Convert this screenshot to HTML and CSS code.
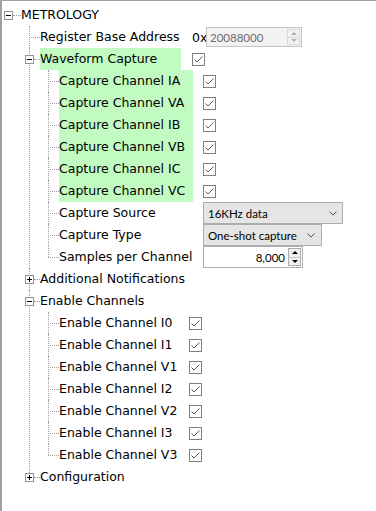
FILE: index.html
```html
<!DOCTYPE html>
<html lang="en">
<head>
    <meta charset="UTF-8">
    <title>METROLOGY</title>
    <link rel="stylesheet" href="styles.css">
</head>
<body>
    <svg class="defs" aria-hidden="true">
        <symbol id="minus" viewBox="0 0 9 9">
            <rect x="0.5" y="0.5" width="8" height="8" fill="#fff" stroke="#919191"/>
            <path d="M2 4.5H7" stroke="#000"/>
        </symbol>
        <symbol id="plus" viewBox="0 0 9 9">
            <rect x="0.5" y="0.5" width="8" height="8" fill="#fff" stroke="#919191"/>
            <path d="M2 4.5H7M4.5 2V7" stroke="#000"/>
        </symbol>
        <symbol id="check" viewBox="0 0 13 13">
            <rect x="0.5" y="0.5" width="12" height="12" fill="#fff" stroke="#7f7f7f"/>
            <path d="M2.5 6.5L5 9L10.5 3.5" fill="none" stroke="#5a5a5a" stroke-width="1"/>
        </symbol>
        <symbol id="chevron" viewBox="0 0 8 5">
            <path d="M0.5 0.5L4 4L7.5 0.5" fill="none" stroke="#555"/>
        </symbol>
    </svg>

    <div class="panel">
        <div class="tree">
            <div class="row root">
                <svg class="toggle"><use href="#minus"/></svg><span class="stub wide"></span><span class="text">METROLOGY</span>
            </div>
            <ul class="branch top">
                <li>
                    <div class="row">
                        <span class="stub"></span>
                        <span class="label col-a">Register Base Address</span>
                        <span class="prefix">0x</span>
                        <div class="field disabled">
                            <span class="txt">20088000</span>
                            <span class="spin"><i class="up"></i><i class="down"></i></span>
                        </div>
                    </div>
                </li>
                <li>
                    <div class="row">
                        <svg class="toggle"><use href="#minus"/></svg><span class="stub short"></span>
                        <span class="label col-a hl">Waveform Capture</span>
                        <svg class="check"><use href="#check"/></svg>
                    </div>
                    <ul class="branch">
                        <li><div class="row"><span class="stub"></span><span class="label col-b hl">Capture Channel IA</span><svg class="check"><use href="#check"/></svg></div></li>
                        <li><div class="row"><span class="stub"></span><span class="label col-b hl">Capture Channel VA</span><svg class="check"><use href="#check"/></svg></div></li>
                        <li><div class="row"><span class="stub"></span><span class="label col-b hl">Capture Channel IB</span><svg class="check"><use href="#check"/></svg></div></li>
                        <li><div class="row"><span class="stub"></span><span class="label col-b hl">Capture Channel VB</span><svg class="check"><use href="#check"/></svg></div></li>
                        <li><div class="row"><span class="stub"></span><span class="label col-b hl">Capture Channel IC</span><svg class="check"><use href="#check"/></svg></div></li>
                        <li><div class="row"><span class="stub"></span><span class="label col-b hl">Capture Channel VC</span><svg class="check"><use href="#check"/></svg></div></li>
                        <li>
                            <div class="row">
                                <span class="stub"></span><span class="label col-b">Capture Source</span>
                                <div class="select source"><span>16KHz data</span><svg class="chev"><use href="#chevron"/></svg></div>
                            </div>
                        </li>
                        <li>
                            <div class="row">
                                <span class="stub"></span><span class="label col-b">Capture Type</span>
                                <div class="select type"><span>One-shot capture</span><svg class="chev"><use href="#chevron"/></svg></div>
                            </div>
                        </li>
                        <li>
                            <div class="row">
                                <span class="stub"></span><span class="label col-b">Samples per Channel</span>
                                <div class="field number">
                                    <span class="txt">8,000</span>
                                    <span class="spin"><i class="up"></i><i class="down"></i></span>
                                </div>
                            </div>
                        </li>
                    </ul>
                </li>
                <li>
                    <div class="row"><svg class="toggle"><use href="#plus"/></svg><span class="stub short"></span><span class="text">Additional Notifications</span></div>
                </li>
                <li>
                    <div class="row"><svg class="toggle"><use href="#minus"/></svg><span class="stub short"></span><span class="text">Enable Channels</span></div>
                    <ul class="branch">
                        <li><div class="row"><span class="stub"></span><span class="label col-c">Enable Channel I0</span><svg class="check"><use href="#check"/></svg></div></li>
                        <li><div class="row"><span class="stub"></span><span class="label col-c">Enable Channel I1</span><svg class="check"><use href="#check"/></svg></div></li>
                        <li><div class="row"><span class="stub"></span><span class="label col-c">Enable Channel V1</span><svg class="check"><use href="#check"/></svg></div></li>
                        <li><div class="row"><span class="stub"></span><span class="label col-c">Enable Channel I2</span><svg class="check"><use href="#check"/></svg></div></li>
                        <li><div class="row"><span class="stub"></span><span class="label col-c">Enable Channel V2</span><svg class="check"><use href="#check"/></svg></div></li>
                        <li><div class="row"><span class="stub"></span><span class="label col-c">Enable Channel I3</span><svg class="check"><use href="#check"/></svg></div></li>
                        <li><div class="row"><span class="stub"></span><span class="label col-c">Enable Channel V3</span><svg class="check"><use href="#check"/></svg></div></li>
                    </ul>
                </li>
                <li>
                    <div class="row"><svg class="toggle"><use href="#plus"/></svg><span class="stub short"></span><span class="text">Configuration</span></div>
                </li>
            </ul>
        </div>
    </div>
</body>
</html>
```

FILE: styles.css
```css
body {
    margin: 0;
    font-family: "DejaVu Sans", Verdana, sans-serif;
    font-size: 12.5px;
    color: #000;
    background: #fff;
}
.defs {
    position: absolute;
    width: 0;
    height: 0;
}
.panel {
    height: 511px;
    box-sizing: border-box;
    border-left: 2px solid #a0a0a0;
    border-top: 1px solid #a0a0a0;
    padding-top: 3px;
    overflow: hidden;
}
.row {
    display: flex;
    align-items: center;
    height: 22px;
    white-space: nowrap;
}
.root {
    padding-left: 2px;
}
.toggle {
    position: relative;
    display: block;
    flex: none;
    width: 9px;
    height: 9px;
}
.branch .toggle {
    margin-left: -4px;
}
.stub {
    flex: none;
    width: 11px;
    height: 0;
    border-top: 1px dotted #a0a0a0;
}
.stub.wide {
    width: 8px;
}
.stub.short {
    width: 6px;
}
.branch {
    list-style: none;
    margin: 0 0 0 19px;
    padding: 0;
}
.tree > .branch {
    margin-left: 27px;
}
.branch > li {
    position: relative;
}
.branch > li::before {
    content: "";
    position: absolute;
    left: 0;
    top: 0;
    bottom: 0;
    border-left: 1px dotted #a0a0a0;
}
.branch > li:last-child::before {
    bottom: auto;
    height: 11px;
}
.label {
    display: block;
    flex: none;
    height: 22px;
    line-height: 22px;
}
.text {
    line-height: 22px;
}
.col-a {
    width: 141px;
    margin-right: 11px;
}
.col-b {
    width: 134px;
    margin-right: 10px;
}
.col-c {
    width: 120px;
    margin-right: 10px;
}
.hl {
    background: #c1fbc1;
}
.check {
    display: block;
    flex: none;
    width: 13px;
    height: 13px;
}
.prefix {
    width: 13px;
}
.field,
.select {
    box-sizing: border-box;
    display: flex;
    align-items: center;
    flex: none;
    border: 1px solid #adadad;
    font-family: Lato, "Noto Sans", sans-serif;
    font-size: 11.5px;
}
.field {
    height: 20px;
}
.field .txt {
    flex: 1;
    padding: 0 3px;
}
.field.disabled {
    width: 96px;
    margin-left: 1px;
    background: #f2f2f2;
    border-color: #c4c4c4;
    color: #6d6d6d;
}
.field.number {
    width: 100px;
    height: 22px;
    background: #fff;
    border-color: #abadb3;
}
.number .txt {
    text-align: right;
}
.spin {
    display: flex;
    flex-direction: column;
    width: 13px;
    height: 16px;
    margin-right: 1px;
}
.spin i {
    display: flex;
    flex: 1;
    align-items: center;
    justify-content: center;
}
.spin i::after {
    content: "";
    border-left: 3px solid transparent;
    border-right: 3px solid transparent;
}
.spin .up::after {
    border-bottom: 3px solid #b0b0b0;
}
.spin .down::after {
    border-top: 3px solid #b0b0b0;
}
.disabled .spin i {
    border: 1px solid #dadada;
}
.disabled .spin .up {
    border-bottom: 0;
}
.number .spin {
    height: 18px;
}
.number .spin i {
    border: 1px solid #acacac;
    background: #f0f0f0;
}
.number .spin .up {
    border-bottom-color: #c8c8c8;
}
.number .spin .down {
    border-top: 0;
}
.number .spin .up::after {
    border-bottom-color: #000;
}
.number .spin .down::after {
    border-top-color: #000;
}
.select {
    height: 22px;
    justify-content: space-between;
    padding: 0 5px 0 4px;
    background: #e5e5e5;
}
.source {
    width: 140px;
}
.type {
    width: 119px;
    padding-right: 6px;
}
.chev {
    display: block;
    width: 8px;
    height: 5px;
}
```
